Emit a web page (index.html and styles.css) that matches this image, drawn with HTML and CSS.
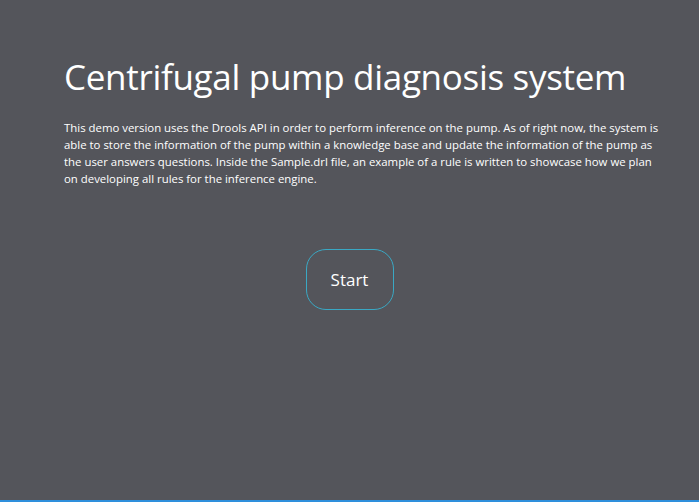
FILE: index.html
```html
<!DOCTYPE html>
<html>
<head>
<meta charset="utf-8">
<link rel="stylesheet" href="styles.css">
</head>
<body>
<main class="page">
  <section class="content">
    <h1 class="title">Centrifugal pump diagnosis system</h1>
    <p class="desc">This demo version uses the Drools API in order to perform inference on the pump. As of right now, the system is able to store the information of the pump within a knowledge base and update the information of the pump as the user answers questions. Inside the Sample.drl file, an example of a rule is written to showcase how we plan on developing all rules for the inference engine.</p>
  </section>
  <div class="actions">
    <button class="start">Start</button>
  </div>
</main>
</body>
</html>
```
FILE: styles.css
```css
html, body {
  margin: 0;
  padding: 0;
  height: 100%;
}
body {
  background: #54555b;
  font-family: "Open Sans", "Noto Sans", sans-serif;
  color: #ffffff;
}
.page {
  box-sizing: border-box;
  height: 502px;
  border-bottom: 2px solid #2e8fdc;
  display: flex;
  flex-direction: column;
}
.content {
  padding: 55px 30px 0 64px;
}
.title {
  margin: 0;
  font-weight: 400;
  font-size: 35px;
  line-height: 44px;
  letter-spacing: -0.3px;
}
.desc {
  margin: 20px 0 0 0;
  font-size: 11.4px;
  line-height: 17px;
  max-width: 597px;
}
.actions {
  display: flex;
  justify-content: center;
  padding-top: 62px;
}
.start {
  width: 88px;
  height: 61px;
  border: 1.5px solid #3aa8c4;
  border-radius: 20px;
  background: transparent;
  color: #ffffff;
  font-family: "Open Sans", "Noto Sans", sans-serif;
  font-size: 17px;
  padding: 0;
}
```
